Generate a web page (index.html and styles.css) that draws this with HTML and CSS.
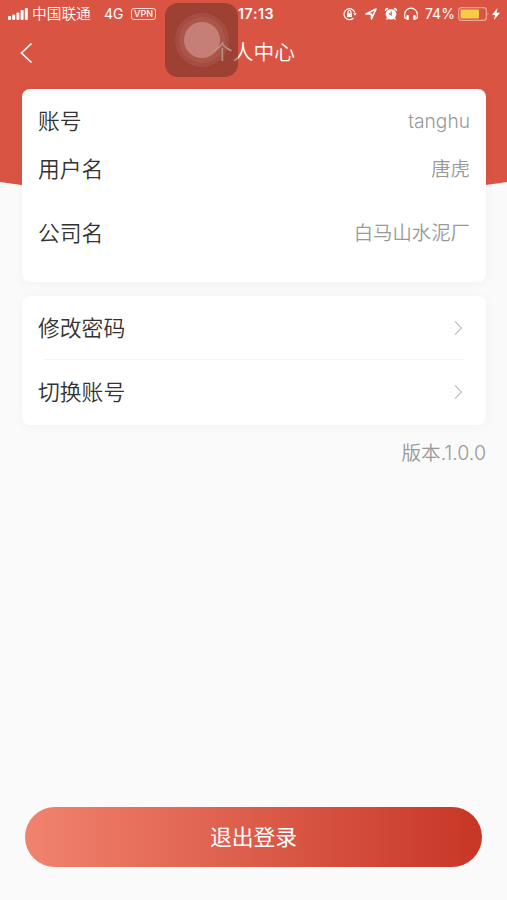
FILE: index.html
```html
<!DOCTYPE html>
<html lang="zh-CN">
<head>
<meta charset="utf-8">
<title>个人中心</title>
<link rel="stylesheet" href="styles.css">
</head>
<body>
<div class="screen">
  <svg class="backdrop" viewBox="0 0 507 204" aria-hidden="true"><path d="M0 0H507V182Q253.500 220 0 182Z" fill="#d95442"/></svg>
  <header class="status">
    <svg class="signal" width="21" height="14" viewBox="0 0 21 14" fill="#fff"><rect x="0" y="9" width="3" height="4" rx="1"/><rect x="4.200" y="7.500" width="3" height="5.500" rx="1"/><rect x="8.400" y="5.500" width="3" height="7.500" rx="1"/><rect x="12.600" y="3" width="3" height="10" rx="1"/><rect x="16.800" y="1" width="3" height="12" rx="1"/></svg>
    <span class="carrier">中国联通</span>
    <span class="network">4G</span>
    <span class="vpn">VPN</span>
    <span class="clock">17:13</span>
    <svg class="lock" width="14" height="14" viewBox="0 0 14 14" fill="none" stroke="#fff" stroke-width="1.200"><path d="M11.800 5.500A5.500 5.500 0 1 0 10.500 11"/><path d="M10.300 6.300h3.400L12 8.800z" fill="#fff" stroke="none"/><rect x="4" y="6.200" width="5" height="3.800" rx=".5" fill="#fff" stroke="none"/><path d="M5 6.500V5a1.500 1.500 0 0 1 3 0v1.500"/></svg>
    <svg class="location" width="12" height="12" viewBox="0 0 12 12" fill="none" stroke="#fff" stroke-width="1.600" stroke-linejoin="round"><path d="M1 6 11 1 6.500 11V6Z"/></svg>
    <svg class="alarm" width="14" height="14" viewBox="0 0 14 14"><circle cx="7" cy="7.300" r="5.300" fill="#fff"/><path d="M1.600 4a2 2 0 0 1 2.500-2.300M12.400 4a2 2 0 0 0-2.500-2.300" stroke="#fff" stroke-width="1.600" fill="none"/><path d="M3.500 11.200 2.600 12.600M10.500 11.200l.9 1.400" stroke="#fff" stroke-width="1.300"/><path d="M7.200 4.500V8L5 6.500" stroke="#d95442" stroke-width="1.100" fill="none"/></svg>
    <svg class="phones" width="14" height="14" viewBox="0 0 14 14"><path d="M1.500 12Q.2 10 .8 7A6.200 5.800 0 0 1 13.200 7Q13.800 10 12.500 12" fill="none" stroke="#fff" stroke-width="1.200"/><rect x="2.300" y="8" width="2.500" height="5" rx="1" fill="#fff"/><rect x="9.200" y="8" width="2.500" height="5" rx="1" fill="#fff"/></svg>
    <span class="percent">74%</span>
    <svg class="battery" width="32" height="14" viewBox="0 0 32 14"><rect x=".7" y=".7" width="27.600" height="12.600" rx="2.600" fill="none" stroke="#eda69c" stroke-width="1.200"/><rect x="2.500" y="2.500" width="18.500" height="9" rx="1" fill="#f6cb45"/><path d="M29.700 5q1.600 2 0 4z" fill="#eda69c"/></svg>
    <svg class="bolt" width="8" height="12" viewBox="0 0 8 12" fill="#fff"><path d="M5.500 0 0 7h3L2 12l6-7.300H4.600z"/></svg>
  </header>
  <nav class="navbar">
    <svg class="back" width="14" height="22" viewBox="0 0 14 22" fill="none" stroke="#fff" stroke-width="1.700"><path d="M12.500 1.500 2.500 11 12.500 20.500"/></svg>
    <h1 class="title">个人中心</h1>
  </nav>
  <main class="content">
    <section class="card profile">
      <div class="row account-row"><span class="label">账号</span><span class="value latin">tanghu</span></div>
      <div class="row name-row"><span class="label">用户名</span><span class="value">唐虎</span></div>
      <div class="row company-row"><span class="label">公司名</span><span class="value">白马山水泥厂</span></div>
    </section>
    <section class="card actions">
      <a class="row"><span class="label">修改密码</span><svg class="chevron" width="9" height="16" viewBox="0 0 9 16"><path d="M1 1.500 7.500 8 1 14.500"/></svg></a>
      <a class="row"><span class="label">切换账号</span><svg class="chevron" width="9" height="16" viewBox="0 0 9 16"><path d="M1 1.500 7.500 8 1 14.500"/></svg></a>
    </section>
    <p class="version">版本.1.0.0</p>
  </main>
  <button class="logout">退出登录</button>
  <div class="assistive"><i class="ring"><i class="ring-mid"><i class="ring-core"></i></i></i></div>
</div>
</body>
</html>
```
FILE: styles.css
```css
* { box-sizing: border-box; }
body {
  margin: 0;
  font-family: Inter, "Noto Sans CJK SC", sans-serif;
  font-weight: 400;
  background: #fafafa;
}
.screen {
  position: relative;
  display: flex;
  flex-direction: column;
  width: 507px;
  height: 900px;
  overflow: hidden;
}
.backdrop { position: absolute; top: 0; left: 0; width: 507px; height: 204px; }
.status {
  position: relative;
  display: flex;
  align-items: center;
  height: 27px;
  padding-left: 8px;
  color: #fff;
  font-size: 14px;
  line-height: 20px;
  white-space: nowrap;
}
.status > * { flex: none; }
.carrier { width: 60px; margin-left: 3px; font-size: 14.700px; font-weight: 350; }
.network { width: 22px; margin-left: 12px; font-size: 14px; }
.vpn {
  width: 25px;
  height: 12px;
  margin-left: 5px;
  border: 1px solid #f8d8d3;
  border-radius: 3px;
  font-size: 9px;
  font-weight: 500;
  line-height: 10px;
  text-align: center;
}
.clock { width: 40px; margin-left: 82px; font-size: 14.200px; font-weight: 600; letter-spacing: .6px; }
.lock { margin-left: 65px; }
.location { margin-left: 8px; }
.alarm { margin-left: 7px; }
.phones { margin-left: 6px; }
.percent { width: 30px; margin-left: 7px; font-size: 14px; }
.battery { margin-left: 3px; }
.bolt { margin-left: 2px; }
.navbar {
  position: relative;
  display: flex;
  align-items: center;
  justify-content: center;
  height: 50px;
}
.back { position: absolute; left: 19px; top: 15px; }
.title {
  margin: 2px 0 0;
  color: #fff;
  font-size: 20.700px;
  font-weight: 350;
  line-height: 30px;
}
.content { position: relative; padding: 12px 21px 0 22px; }
.card {
  background: #fff;
  border-radius: 8px;
  box-shadow: 0 1px 12px rgba(0, 0, 0, .035);
}
.profile { height: 193px; }
.actions { height: 129px; margin-top: 14px; }
.row {
  display: flex;
  align-items: center;
  justify-content: space-between;
  height: 64px;
  padding: 0 16px;
}
.account-row { height: 63px; }
.name-row { height: 33px; }
.company-row { height: 95px; }
.label { color: #333; font-size: 21.800px; font-weight: 350; line-height: 32px; }
.value { color: #999; font-size: 19.400px; font-weight: 350; line-height: 30px; }
.latin { font-size: 19.200px; font-weight: 300; letter-spacing: 0; }
.actions .row + .row { position: relative; }
.actions .row + .row::before {
  content: "";
  position: absolute;
  top: -1px;
  left: 22px;
  right: 22px;
  height: 1px;
  background: #f5f5f5;
}
.chevron { margin-right: 7px; fill: none; stroke: #c5c5c5; stroke-width: 1.300; }
.version {
  margin: 13px 0 0;
  color: #999;
  font-size: 19.600px;
  font-weight: 350;
  line-height: 30px;
  text-align: right;
}
.logout {
  width: 457px;
  height: 60px;
  margin: auto 0 33px 25px;
  padding: 0;
  border: 0;
  border-radius: 30px;
  background: linear-gradient(90deg, #f1836e, #c73626);
  color: #fff;
  font: 400 21.800px/60px Inter, "Noto Sans CJK SC", sans-serif;
}
.assistive {
  position: absolute;
  left: 165px;
  top: 3px;
  display: grid;
  place-items: center;
  width: 73px;
  height: 74px;
  border-radius: 13px;
  background: rgba(102, 48, 42, .51);
}
.ring, .ring-mid, .ring-core { display: grid; place-items: center; border-radius: 50%; }
.ring { width: 54px; height: 54px; background: rgba(200, 125, 115, .2); }
.ring-mid { width: 46px; height: 46px; background: rgba(200, 125, 115, .2); }
.ring-core { width: 36px; height: 36px; background: rgba(208, 145, 137, .7); }
```
